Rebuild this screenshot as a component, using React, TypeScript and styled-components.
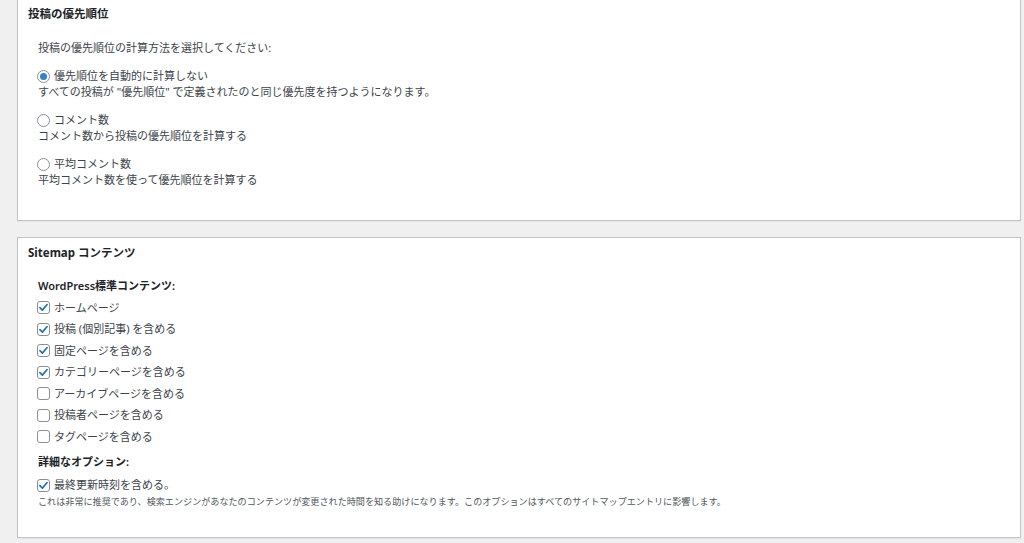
import React from "react";
import styled, { createGlobalStyle } from "styled-components";

const Global = createGlobalStyle`
  html, body { margin: 0; padding: 0; background: #f0f0f1; }
  body {
    font-family: "Noto Sans", "Noto Sans CJK JP", sans-serif;
    color: #3c434a;
    font-size: 11px;
    overflow: hidden;
  }
  #root { width: 1024px; height: 543px; overflow: hidden; }
`;

const Page = styled.div`
  display: flex;
  flex-direction: column;
  gap: 16px;
  padding: 0 3px 0 17px;
  margin-top: -2px;
`;

const Panel = styled.section`
  background: #fff;
  border: 1px solid #c3c4c7;
  box-shadow: 0 1px 1px rgba(0, 0, 0, 0.04);
`;

const PanelTitle = styled.h2`
  margin: 0;
  padding: 5px 10px;
  font-size: 11.5px;
  line-height: 20px;
  font-weight: 700;
  color: #1d2327;
`;

const PanelBody = styled.div<{ $top: number; $bottom: number }>`
  padding: ${(p) => p.$top}px 20px ${(p) => p.$bottom}px 20px;
  display: flex;
  flex-direction: column;
`;

const Intro = styled.p`
  margin: 0 0 12px;
  line-height: 16px;
`;

const OptionBlock = styled.div`
  display: flex;
  flex-direction: column;
  margin-bottom: 12px;
  &:last-child { margin-bottom: 0; }
`;

const Row = styled.label<{ $h?: number }>`
  display: flex;
  align-items: center;
  gap: 4px;
  height: ${(p) => p.$h ?? 16}px;
  line-height: 16px;
`;

const Desc = styled.div`
  line-height: 16px;
`;

const GroupLabel = styled.div<{ $mt?: number; $mb?: number }>`
  font-weight: 600;
  color: #1d2327;
  line-height: 16px;
  margin-top: ${(p) => p.$mt ?? 0}px;
  margin-bottom: ${(p) => p.$mb ?? 3}px;
`;

const Note = styled.div`
  font-size: 9.1px;
  line-height: 12px;
  color: #50575e;
`;

const RadioCircle = styled.span<{ $on: boolean }>`
  box-sizing: border-box;
  width: 13px;
  height: 13px;
  flex: 0 0 13px;
  margin-left: -1px;
  border-radius: 50%;
  border: 1px solid #8c8f94;
  background: #fff;
  display: flex;
  align-items: center;
  justify-content: center;
  &::after {
    content: "";
    width: 7px;
    height: 7px;
    border-radius: 50%;
    background: ${(p) => (p.$on ? "#3582c4" : "transparent")};
  }
`;

const CheckBox = styled.span`
  box-sizing: border-box;
  width: 13px;
  height: 13px;
  flex: 0 0 13px;
  margin-left: -1px;
  border-radius: 3px;
  border: 1px solid #8c8f94;
  background: #fff;
  display: flex;
  align-items: center;
  justify-content: center;
`;

const Radio = ({ on, label }: { on: boolean; label: string }) => (
  <Row>
    <RadioCircle $on={on} />
    <span>{label}</span>
  </Row>
);

const Check = ({ on, label }: { on: boolean; label: string }) => (
  <Row $h={21.5}>
    <CheckBox>
      {on && (
        <svg width="11" height="11" viewBox="0 0 20 20">
          <path d="M3.5 10.2 L8 14.8 L16.6 4.6" fill="none" stroke="#2271b1" strokeWidth="3" strokeLinecap="round" strokeLinejoin="round" />
        </svg>
      )}
    </CheckBox>
    <span>{label}</span>
  </Row>
);

const radios = [
  { on: true, label: "優先順位を自動的に計算しない", desc: "すべての投稿が \"優先順位\" で定義されたのと同じ優先度を持つようになります。" },
  { on: false, label: "コメント数", desc: "コメント数から投稿の優先順位を計算する" },
  { on: false, label: "平均コメント数", desc: "平均コメント数を使って優先順位を計算する" },
];

const checks = [
  { on: true, label: "ホームページ" },
  { on: true, label: "投稿 (個別記事) を含める" },
  { on: true, label: "固定ページを含める" },
  { on: true, label: "カテゴリーページを含める" },
  { on: false, label: "アーカイブページを含める" },
  { on: false, label: "投稿者ページを含める" },
  { on: false, label: "タグページを含める" },
];

export default function App() {
  return (
    <>
      <Global />
      <Page>
        <Panel>
          <PanelTitle>投稿の優先順位</PanelTitle>
          <PanelBody $top={11} $bottom={32}>
            <Intro>投稿の優先順位の計算方法を選択してください:</Intro>
            {radios.map((r) => (
              <OptionBlock key={r.label}>
                <Radio on={r.on} label={r.label} />
                <Desc>{r.desc}</Desc>
              </OptionBlock>
            ))}
          </PanelBody>
        </Panel>
        <Panel>
          <PanelTitle>Sitemap コンテンツ</PanelTitle>
          <PanelBody $top={10} $bottom={29}>
            <GroupLabel>WordPress標準コンテンツ:</GroupLabel>
            {checks.map((c) => (
              <Check key={c.label} on={c.on} label={c.label} />
            ))}
            <GroupLabel $mt={6} $mb={5}>詳細なオプション:</GroupLabel>
            <Check on={true} label="最終更新時刻を含める。" />
            <Note>これは非常に推奨であり、検索エンジンがあなたのコンテンツが変更された時間を知る助けになります。このオプションはすべてのサイトマップエントリに影響します。</Note>
          </PanelBody>
        </Panel>
      </Page>
    </>
  );
}
